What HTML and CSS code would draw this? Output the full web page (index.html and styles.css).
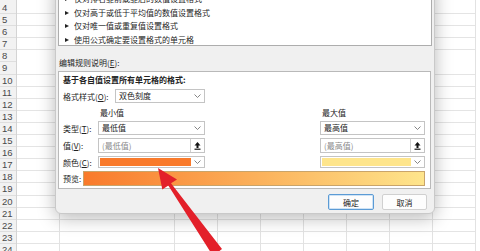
FILE: index.html
```html
<!DOCTYPE html>
<html lang="zh-CN">
<head>
  <meta charset="UTF-8">
  <title>新建格式规则</title>
  <link rel="stylesheet" href="styles.css">
</head>
<body>
  <div class="sheet">
    <div class="rowhead">
      <div class="rn">4</div><div class="rn">5</div><div class="rn">6</div><div class="rn">7</div>
      <div class="rn">8</div><div class="rn">9</div><div class="rn">10</div><div class="rn">11</div>
      <div class="rn">12</div><div class="rn">13</div><div class="rn">14</div><div class="rn">15</div>
      <div class="rn">16</div><div class="rn">17</div><div class="rn">18</div><div class="rn">19</div>
      <div class="rn">20</div><div class="rn">21</div><div class="rn">22</div><div class="rn">23</div>
      <div class="rn">24</div>
    </div>
    <div class="col col-a"></div>
    <div class="col col-b"></div>
    <div class="col"></div>
    <div class="col"></div>
    <div class="col"></div>
    <div class="col"></div>
    <div class="col"></div>
    <div class="col"></div>
    <div class="col"></div>
  </div>

  <div class="dialog">
    <div class="rules">
      <div class="rule"><i class="tri"></i>仅对排名靠前或靠后的数值设置格式</div>
      <div class="rule"><i class="tri"></i>仅对高于或低于平均值的数值设置格式</div>
      <div class="rule"><i class="tri"></i>仅对唯一值或重复值设置格式</div>
      <div class="rule"><i class="tri"></i>使用公式确定要设置格式的单元格</div>
    </div>

    <div class="desc-label">编辑规则说明(<u>E</u>):</div>

    <div class="panel">
      <div class="panel-title">基于各自值设置所有单元格的格式:</div>
      <div class="style-row">
        <span class="lbl style-lbl">格式样式(<u>O</u>):</span>
        <div class="select style-select">
          <span class="sel-text">双色刻度</span>
          <span class="chev"><svg width="7" height="4" viewBox="0 0 7 4"><polyline points="0.5,0.5 3.5,3.5 6.5,0.5" fill="none" stroke="#777" stroke-width="0.9"/></svg></span>
        </div>
      </div>

      <div class="grid">
        <span></span>
        <span class="colhead">最小值</span>
        <span></span>
        <span class="colhead">最大值</span>

        <span class="lbl">类型(<u>T</u>):</span>
        <div class="select">
          <span class="sel-text">最低值</span>
          <span class="chev"><svg width="7" height="4" viewBox="0 0 7 4"><polyline points="0.5,0.5 3.5,3.5 6.5,0.5" fill="none" stroke="#777" stroke-width="0.9"/></svg></span>
        </div>
        <span></span>
        <div class="select">
          <span class="sel-text">最高值</span>
          <span class="chev"><svg width="7" height="4" viewBox="0 0 7 4"><polyline points="0.5,0.5 3.5,3.5 6.5,0.5" fill="none" stroke="#777" stroke-width="0.9"/></svg></span>
        </div>

        <span class="lbl">值(<u>V</u>):</span>
        <div class="input">
          <span class="placeholder">(最低值)</span>
          <span class="pick"><svg width="7" height="8" viewBox="0 0 7 8"><polygon points="3.5,0 6.5,3.5 0.5,3.5" fill="#111"/><rect x="2.5" y="3" width="2" height="3" fill="#111"/><rect x="0.5" y="6.6" width="6" height="1.2" fill="#111"/></svg></span>
        </div>
        <span></span>
        <div class="input">
          <span class="placeholder">(最高值)</span>
          <span class="pick"><svg width="7" height="8" viewBox="0 0 7 8"><polygon points="3.5,0 6.5,3.5 0.5,3.5" fill="#111"/><rect x="2.5" y="3" width="2" height="3" fill="#111"/><rect x="0.5" y="6.6" width="6" height="1.2" fill="#111"/></svg></span>
        </div>

        <span class="lbl">颜色(<u>C</u>):</span>
        <div class="color">
          <span class="swatch swatch-min"></span>
          <span class="chev"><svg width="7" height="4" viewBox="0 0 7 4"><polyline points="0.5,0.5 3.5,3.5 6.5,0.5" fill="none" stroke="#777" stroke-width="0.9"/></svg></span>
        </div>
        <span></span>
        <div class="color">
          <span class="swatch swatch-max"></span>
          <span class="chev"><svg width="7" height="4" viewBox="0 0 7 4"><polyline points="0.5,0.5 3.5,3.5 6.5,0.5" fill="none" stroke="#777" stroke-width="0.9"/></svg></span>
        </div>
      </div>

      <div class="preview-row">
        <span class="lbl preview-lbl">预览:</span>
        <div class="preview-bar"></div>
      </div>
    </div>

    <div class="buttons">
      <button class="btn btn-ok">确定</button>
      <button class="btn">取消</button>
    </div>
  </div>

  <svg class="arrow" width="480" height="251" viewBox="0 0 480 251">
    <polygon fill="#e3202a" points="158,168 177,179.5 171,183.2 222,249 213,256 168.3,185.4 162.3,189.5"/>
  </svg>
</body>
</html>
```

FILE: styles.css
```css
* { margin: 0; padding: 0; box-sizing: border-box; }
body {
  width: 480px;
  height: 251px;
  overflow: hidden;
  position: relative;
  background: #fff;
  font-family: "Noto Sans CJK SC", "Liberation Sans", sans-serif;
  color: #222;
}
u { text-decoration: underline; text-underline-offset: 1px; }

/* spreadsheet behind the dialog */
.sheet {
  display: flex;
  height: 251px;
}
.rowhead {
  width: 17px;
  flex: none;
  background: #f2f2f2;
  border-right: 1px solid #d4d4d4;
  padding-top: 2px;
}
.rn {
  height: 12.1px;
  line-height: 11px;
  font-family: "Liberation Sans", sans-serif;
  font-size: 9.5px;
  color: #4a4a4a;
  padding-left: 2px;
  border-bottom: 1px solid #dedede;
}
.col {
  width: 43px;
  flex: none;
  border-right: 1px solid #e2e2e2;
  background: repeating-linear-gradient(to bottom, transparent 0, transparent 11.1px, #e4e4e4 11.1px, #e4e4e4 12.1px);
  background-position: 0 2px;
}
.col-b { width: 115px; }

/* dialog */
.dialog {
  position: absolute;
  left: 55px;
  top: -20px;
  width: 380px;
  height: 234px;
  background: #f0f0f0;
  border: 1px solid #c9c9c9;
  border-radius: 0 0 6px 6px;
  box-shadow: 0 4px 18px rgba(0, 0, 0, 0.28);
  padding: 0 0 0 2px;
  font-size: 8px;
}
.rules {
  width: 374px;
  height: 65px;
  background: #fff;
  border: 1px solid #adadad;
  display: flex;
  flex-direction: column;
  justify-content: flex-end;
  padding-left: 6px;
}
.rule {
  height: 13.5px;
  line-height: 10px;
  padding-top: 3px;
  display: flex;
  align-items: center;
  color: #1e1e1e;
}
.tri {
  width: 0;
  height: 0;
  border-left: 4px solid #222;
  border-top: 2.5px solid transparent;
  border-bottom: 2.5px solid transparent;
  margin-right: 5px;
}
.desc-label {
  margin-top: 11px;
  height: 12px;
  line-height: 12px;
  padding-left: 1px;
}
.panel {
  margin-top: 2px;
  width: 373px;
  background: #fff;
  border: 1px solid #b9b9b9;
  padding: 2px 0 2px 4px;
}
.panel-title {
  height: 12px;
  line-height: 12px;
  font-weight: bold;
}
.style-row {
  display: flex;
  align-items: center;
  margin-top: 3px;
}
.style-lbl { width: 52px; }
.lbl { white-space: nowrap; }

.select, .input, .color {
  display: flex;
  align-items: center;
  border: 1px solid #c4c4c4;
  background: #fff;
}
.select { height: 14px; }
.style-select { width: 90px; }
.sel-text { flex: 1; padding-left: 3px; line-height: 12px; }
.chev {
  width: 13px;
  height: 100%;
  display: flex;
  align-items: center;
  justify-content: center;
}

.grid {
  display: grid;
  grid-template-columns: 35px 107px 115px 105px;
  grid-template-rows: 11px 14px 15px 12px;
  row-gap: 3px;
  align-items: center;
  margin-top: 4px;
}
.grid > .select, .grid > .input, .grid > .color { height: 100%; }
.colhead { padding-left: 2px; line-height: 11px; }

.placeholder { flex: 1; padding-left: 3px; color: #8a8a8a; line-height: 12px; }
.pick {
  width: 14px;
  height: 100%;
  border-left: 1px solid #d0d0d0;
  display: flex;
  align-items: center;
  justify-content: center;
}
.color { padding: 1px 0 1px 1px; }
.swatch { flex: 1; height: 100%; }
.swatch-min { background: #f97a2b; }
.swatch-max { background: #fee58c; }

.preview-row {
  display: flex;
  align-items: center;
  margin-top: 3px;
}
.preview-lbl { width: 20px; }
.preview-bar {
  width: 342px;
  height: 15px;
  border: 1px solid #c9a46a;
  background: linear-gradient(to right, #f97a2b 0%, #fbb05a 50%, #fee58c 100%);
}

.buttons {
  display: flex;
  justify-content: flex-end;
  gap: 8px;
  margin-top: 5px;
  padding-right: 7px;
}
.btn {
  width: 45px;
  height: 16px;
  font-family: "Noto Sans CJK SC", sans-serif;
  font-size: 8px;
  color: #222;
  background: #fdfdfd;
  border: 1px solid #d0d0d0;
  border-radius: 2px;
}
.btn-ok {
  width: 46px;
  border: 1px solid #5b9bd5;
  box-shadow: inset 0 0 0 1px #cfe3f5;
}

.arrow {
  position: absolute;
  left: 0;
  top: 0;
}
```
